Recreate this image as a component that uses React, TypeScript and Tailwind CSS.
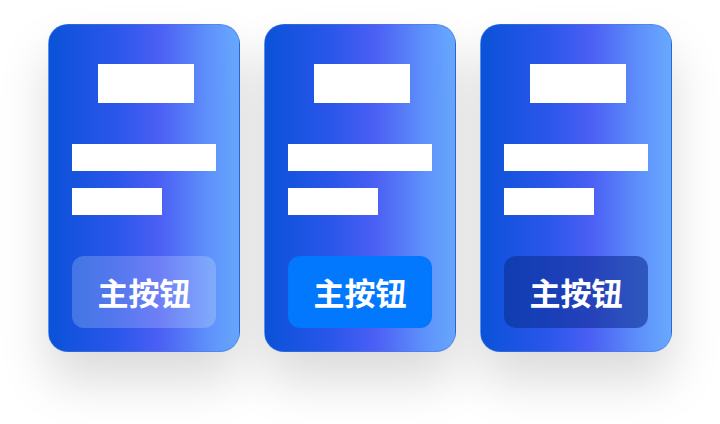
const buttons = [
  'bg-white/20',
  'bg-[#0278ff] border border-[#0a6df0]/40',
  'bg-[#0d2f94]/60',
];

function Card({ btn }: { btn: string }) {
  return (
    <div className="flex h-[328px] w-[192px] flex-col rounded-[20px] border border-[#4a78dc]/50 bg-[linear-gradient(90deg,#0a52d8_0%,#2a56ea_35%,#4b5ff4_58%,#5f93fb_85%,#68a9ff_100%)] px-[23px] pt-[39px] pb-[23px] shadow-[0_28px_50px_rgba(0,0,0,0.15)]">
      <div className="ml-[26px] h-[39px] w-[96px] bg-white" />
      <div className="mt-[41px] h-[27px] w-[144px] bg-white" />
      <div className="mt-[17px] h-[27px] w-[90px] bg-white" />
      <button
        className={`mt-auto flex h-[72px] w-full items-center justify-center rounded-[12px] text-[31px] font-bold text-white ${btn}`}
      >
        主按钮
      </button>
    </div>
  );
}

export default function App() {
  return (
    <div
      className="flex h-[424px] w-[720px] justify-center gap-6 bg-white pt-6"
      style={{ fontFamily: '"Noto Sans CJK SC", "Noto Sans", sans-serif' }}
    >
      {buttons.map((b) => (
        <Card key={b} btn={b} />
      ))}
    </div>
  );
}
